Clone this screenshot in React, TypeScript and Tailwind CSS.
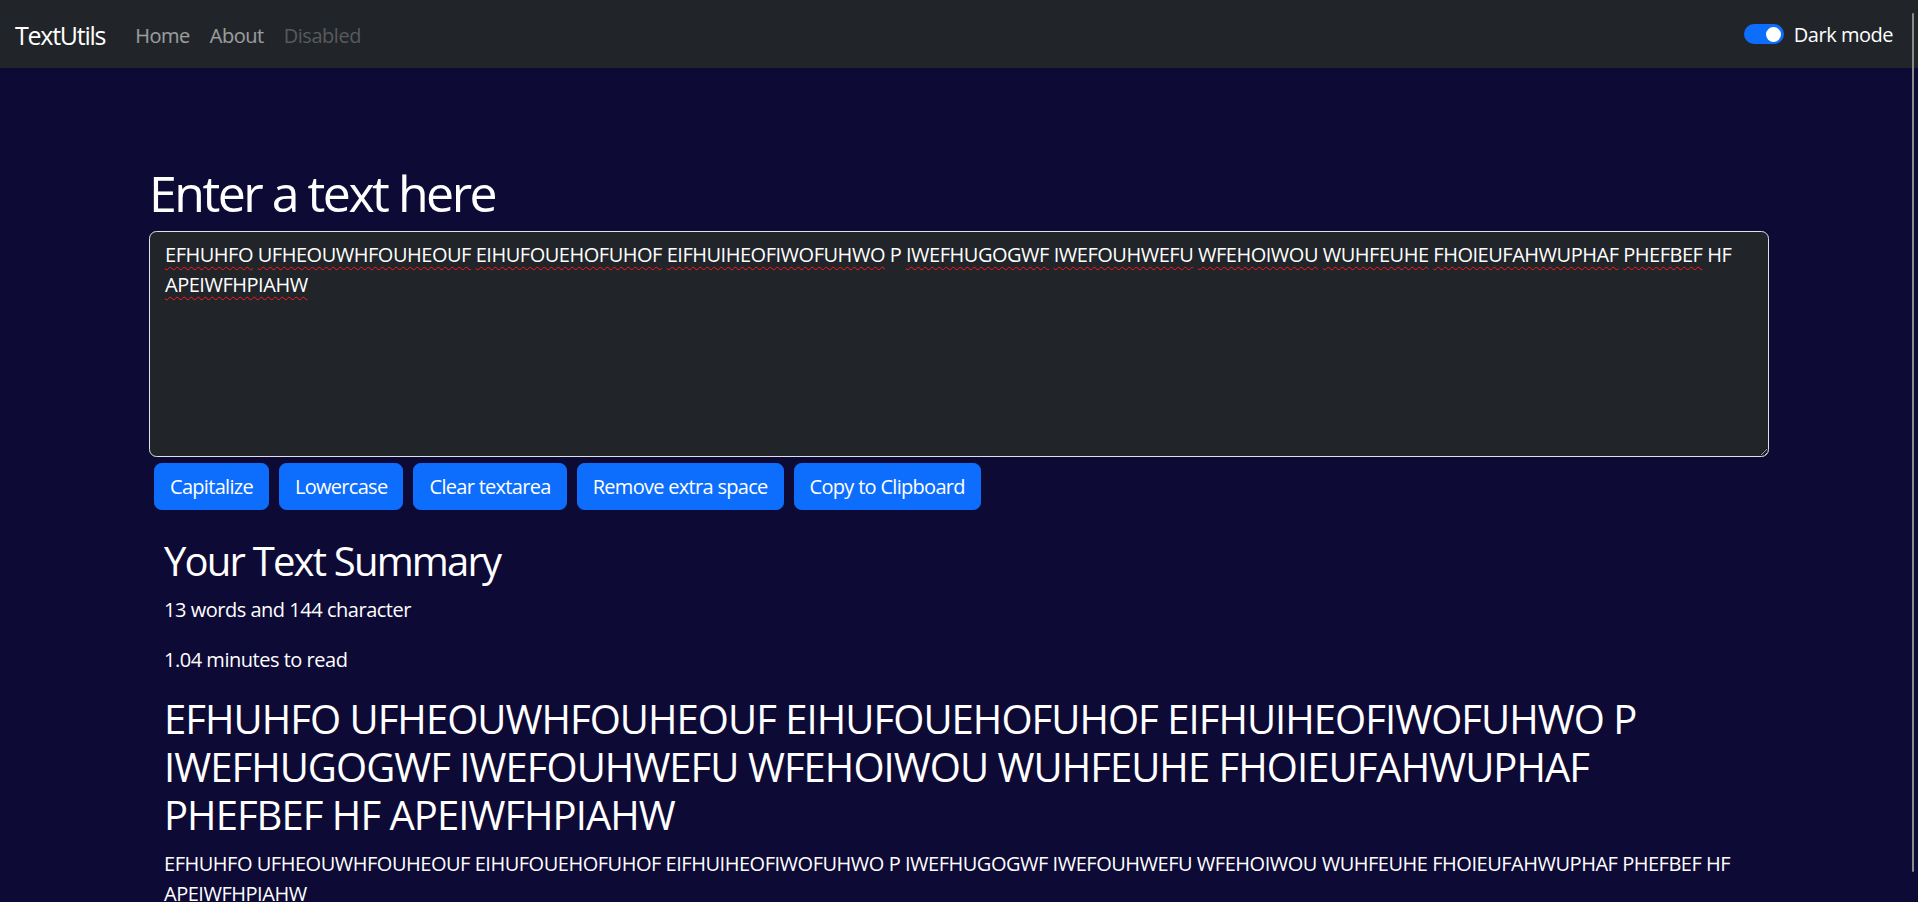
import React from 'react';

const sample =
  'EFHUHFO UFHEOUWHFOUHEOUF EIHUFOUEHOFUHOF EIFHUIHEOFIWOFUHWO P IWEFHUGOGWF IWEFOUHWEFU WFEHOIWOU WUHFEUHE FHOIEUFAHWUPHAF PHEFBEF HF APEIWFHPIAHW';

// words the spell checker flags in the reference
const flagged = (word: string) => word.length > 2;

const Navbar: React.FC = () => {
  return (
    <nav className="flex h-[68px] items-center bg-[#212529] pl-[15px] pr-[25px]">
      <a className="mt-[3px] mr-[20px] text-[25px] leading-[37px] tracking-[-0.05em] text-white">TextUtils</a>
      <ul className="mt-[3px] flex items-center text-[20px] leading-[30px]">
        <li className="px-[10px] text-white/55">Home</li>
        <li className="px-[10px] text-white/55">About</li>
        <li className="px-[10px] text-white/25">Disabled</li>
      </ul>
      <div className="ml-auto flex items-center gap-[10px]">
        <span className="relative block h-[20px] w-[40px] rounded-full bg-[#0d6efd]">
          <span className="absolute right-[3px] top-[2.5px] h-[15px] w-[15px] rounded-full bg-white" />
        </span>
        <label className="mt-[1px] text-[20px] leading-[30px] text-white">Dark mode</label>
      </div>
    </nav>
  );
};

const buttons = ['Capitalize', 'Lowercase', 'Clear textarea', 'Remove extra space', 'Copy to Clipboard'];

export default function App() {
  const words = sample.split(' ');
  const wordCount = words.length;

  return (
    <div className="relative h-screen overflow-hidden bg-[#0e0a36] font-['Open_Sans',sans-serif] tracking-[-0.03em] text-white">
      <Navbar />

      <main className="mx-auto w-[1620px]">
        <h1 className="mt-[95px] mb-[8px] text-[50px] leading-[60px] font-normal tracking-[-0.05em]">Enter a text here</h1>
        <div className="h-[226px] resize-y overflow-auto rounded-[7.5px] border border-[#dee2e6] bg-[#212529] px-[15px] py-[7.5px] text-[20px] leading-[30px] [color-scheme:dark]">
          {words.map((w, i) => (
            <React.Fragment key={i}>
              <span
                className={
                  flagged(w)
                    ? 'underline decoration-[#ff1a1a] decoration-wavy decoration-1 underline-offset-[4px]'
                    : ''
                }
              >
                {w}
              </span>
              {i < words.length - 1 ? ' ' : ''}
            </React.Fragment>
          ))}
        </div>

        <div className="mt-[6px] flex">
          {buttons.map(label => (
            <button
              key={label}
              className="mx-[5px] h-[47px] rounded-[7.5px] border border-[#0d6efd] bg-[#0d6efd] px-[15px] text-[20px] leading-[30px] tracking-[-0.035em] text-white"
            >
              {label}
            </button>
          ))}
        </div>

        <section className="mt-[27px] px-[15px]">
          <h2 className="mb-[10px] text-[40px] leading-[48px] tracking-[-0.045em]">Your Text Summary</h2>
          <p className="mb-[20px] text-[20px] leading-[30px]">
            {wordCount} words and {sample.length} character
          </p>
          <p className="mb-[20px] text-[20px] leading-[30px]">1.04 minutes to read</p>
          <h2 className="mb-[10px] text-[40px] leading-[48px] tracking-[-0.024em]">{sample}</h2>
          <p className="text-[20px] leading-[30px]">{sample}</p>
        </section>
      </main>

      {/* overlay scrollbar thumb */}
      <div className="absolute right-[4px] top-[13px] h-[859px] w-[2px] rounded-full bg-[#8a8a8a]" />
    </div>
  );
}
